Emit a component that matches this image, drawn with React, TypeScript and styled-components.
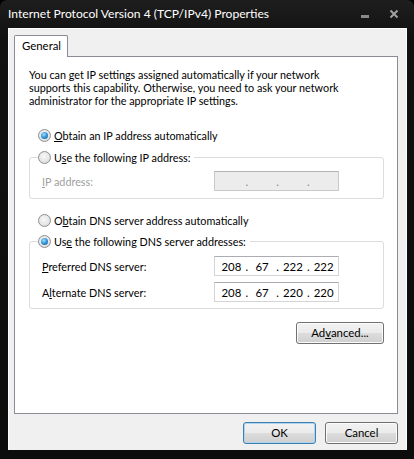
import React from 'react';
import styled, { createGlobalStyle } from 'styled-components';

const GlobalStyle = createGlobalStyle`
  html, body {
    margin: 0;
    padding: 0;
    background: #000;
  }
  * {
    box-sizing: border-box;
  }
`;

const FONT = `Lato, "Open Sans", "Liberation Sans", sans-serif`;
const SIZE = '10.8px';

type RadioProps = { checked?: boolean };

const Radio: React.FC<RadioProps> = ({ checked }) => (
  <RadioCircle>
    {checked && <RadioDot />}
  </RadioCircle>
);

const IpBox: React.FC<{ parts?: string[]; disabled?: boolean }> = ({ parts, disabled }) => (
  <IpField $disabled={disabled}>
    {(parts || ['', '', '', '']).map((p, i) => (
      <React.Fragment key={i}>
        <IpPart>{p}</IpPart>
        {i < 3 && <IpDot $disabled={disabled}>.</IpDot>}
      </React.Fragment>
    ))}
  </IpField>
);

export default function App() {
  return (
    <>
      <GlobalStyle />
      <Window>
        <TitleBar>
          <Title>Internet Protocol Version 4 (TCP/IPv4) Properties</Title>
          <TitleButtons>
            <MinGlyph />
            <CloseGlyph>
              <svg width="10" height="10" viewBox="0 0 10 10">
                <path d="M1.5 1.5 L8.5 8.5 M8.5 1.5 L1.5 8.5" stroke="#a0a0a0" strokeWidth="2" />
              </svg>
            </CloseGlyph>
          </TitleButtons>
        </TitleBar>
        <Client>
          <TabStrip>
            <Tab>General</Tab>
          </TabStrip>
          <TabPanel>
            <Intro>
              <IntroLine>You can get IP settings assigned automatically if your network</IntroLine>
              <IntroLine>supports this capability. Otherwise, you need to ask your network</IntroLine>
              <IntroLine>administrator for the appropriate IP settings.</IntroLine>
            </Intro>

            <RadioRow $top={21}>
              <Radio checked />
              <span><u>O</u>btain an IP address automatically</span>
            </RadioRow>

            <Group $top={15}>
              <GroupLegend>
                <Radio />
                <span>U<u>s</u>e the following IP address:</span>
              </GroupLegend>
              <FieldRow>
                <FieldLabel $disabled><u>I</u>P address:</FieldLabel>
                <IpBox disabled />
              </FieldRow>
            </Group>

            <RadioRow $top={14}>
              <Radio />
              <span>O<u>b</u>tain DNS server address automatically</span>
            </RadioRow>

            <Group $top={14} $tall>
              <GroupLegend>
                <Radio checked />
                <span>Us<u>e</u> the following DNS server addresses:</span>
              </GroupLegend>
              <FieldRow $gap={1}>
                <FieldLabel><u>P</u>referred DNS server:</FieldLabel>
                <IpBox parts={['208', '67', '222', '222']} />
              </FieldRow>
              <FieldRow $gap={6}>
                <FieldLabel>A<u>l</u>ternate DNS server:</FieldLabel>
                <IpBox parts={['208', '67', '220', '220']} />
              </FieldRow>
            </Group>

            <AdvancedRow>
              <Button $width={88}>Ad<u>v</u>anced...</Button>
            </AdvancedRow>
          </TabPanel>
          <Footer>
            <Button $width={73} $default>OK</Button>
            <Button $width={73}>Cancel</Button>
          </Footer>
        </Client>
      </Window>
    </>
  );
}

const Window = styled.div`
  width: 414px;
  height: 459px;
  background: linear-gradient(180deg, #1e1e1e 0%, #111 8%, #0c0c0c 100%);
  border-radius: 7px 7px 0 0;
  padding: 0 7px 9px 8px;
  display: flex;
  flex-direction: column;
  font-family: ${FONT};
`;

const TitleBar = styled.div`
  height: 28px;
  display: flex;
  align-items: center;
  justify-content: space-between;
  padding: 0 0 1px 0;
`;

const Title = styled.div`
  color: #fff;
  font-size: 12.1px;
`;

const TitleButtons = styled.div`
  display: flex;
  align-items: center;
  gap: 20px;
  padding-right: 8px;
`;

const MinGlyph = styled.div`
  width: 8px;
  height: 3px;
  background: #8a8a8a;
  margin-top: 6px;
`;

const CloseGlyph = styled.div`
  display: flex;
  width: 10px;
  height: 10px;
`;

const Client = styled.div`
  flex: 1;
  background: #f0f0f0;
  border: 1px solid #fdfdfd;
  border-bottom: none;
  padding: 6px 8px 0 5px;
  display: flex;
  flex-direction: column;
`;

const TabStrip = styled.div`
  display: flex;
  height: 21px;
  position: relative;
  z-index: 1;
`;

const Tab = styled.div`
  width: 54px;
  height: 22px;
  background: #fff;
  border: 1px solid #898c95;
  border-bottom: none;
  border-radius: 2px 2px 0 0;
  font-size: 11.4px;
  color: #000;
  padding: 3px 0 0 7px;
`;

const TabPanel = styled.div`
  height: 358px;
  background: #fff;
  border: 1px solid #898c95;
  padding: 11px 13px 0 14px;
  display: flex;
  flex-direction: column;
`;

const Intro = styled.div`
  display: flex;
  flex-direction: column;
  font-size: ${SIZE};
  color: #000;
`;

const IntroLine = styled.div`
  height: 13px;
  line-height: 13px;
  white-space: nowrap;
`;

const RadioRow = styled.div<{ $top: number }>`
  display: flex;
  align-items: center;
  gap: 3px;
  margin-top: ${p => p.$top}px;
  padding-left: 9px;
  font-size: ${SIZE};
  height: 14px;
  color: #000;
`;

const RadioCircle = styled.span`
  width: 13px;
  height: 13px;
  border-radius: 50%;
  border: 1px solid #8e8f8f;
  background: radial-gradient(circle at 45% 40%, #f8f8f8 0%, #e4e4e4 60%, #cfcfcf 100%);
  display: inline-flex;
  align-items: center;
  justify-content: center;
  flex-shrink: 0;
`;

const RadioDot = styled.span`
  width: 7px;
  height: 7px;
  border-radius: 50%;
  background: radial-gradient(circle at 40% 35%, #9be0ff 0%, #2c8bd0 55%, #145b98 100%);
`;

const Group = styled.div<{ $top: number; $tall?: boolean }>`
  margin-top: ${p => p.$top}px;
  height: ${p => (p.$tall ? 68 : 42)}px;
  border: 1px solid #dcdcdc;
  border-radius: 3px;
  position: relative;
  display: flex;
  flex-direction: column;
  padding: 13px 0 0 12px;
  color: #000;
`;

const GroupLegend = styled.div`
  position: absolute;
  top: -8px;
  left: 8px;
  padding-right: 4px;
  background: #fff;
  display: flex;
  align-items: center;
  gap: 3px;
  font-size: ${SIZE};
  height: 15px;
`;

const FieldRow = styled.div<{ $gap?: number }>`
  display: flex;
  align-items: center;
  justify-content: space-between;
  padding-right: 44px;
  margin-top: ${p => p.$gap ?? 0}px;
  height: 20px;
`;

const FieldLabel = styled.span<{ $disabled?: boolean }>`
  font-size: ${SIZE};
  color: ${p => (p.$disabled ? '#a0a0a0' : '#000')};
`;

const IpField = styled.div<{ $disabled?: boolean }>`
  width: 125px;
  height: 20px;
  border: 1px solid ${p => (p.$disabled ? '#c9c9c9' : '#d5d5d5')};
  border-top-color: ${p => (p.$disabled ? '#b4b4b4' : '#abadb3')};
  background: ${p => (p.$disabled ? '#ececec' : '#fff')};
  display: flex;
  align-items: center;
  padding: 0 2px 0 4px;
  font-size: 11.4px;
  color: #000;
`;

const IpPart = styled.span`
  flex: 1;
  text-align: center;
`;

const IpDot = styled.span<{ $disabled?: boolean }>`
  width: 6px;
  text-align: center;
  color: ${p => (p.$disabled ? '#8a8a8a' : '#000')};
`;

const AdvancedRow = styled.div`
  display: flex;
  justify-content: flex-end;
  margin-top: 13px;
`;

const Button = styled.button<{ $width: number; $default?: boolean }>`
  width: ${p => p.$width}px;
  height: 22px;
  border-radius: 3px;
  border: 1px solid ${p => (p.$default ? '#3c7fb1' : '#707070')};
  box-shadow: inset 0 0 0 1px ${p => (p.$default ? '#b0d4ee' : '#fcfcfc')};
  background: linear-gradient(180deg, #f2f2f2 0%, #ebebeb 49%, #dddddd 50%, #cfcfcf 100%);
  font-family: ${FONT};
  font-size: 11.4px;
  color: #000;
  padding: 0;
  line-height: 18px;
`;

const Footer = styled.div`
  display: flex;
  justify-content: flex-end;
  gap: 9px;
  padding-top: 8px;
`;
